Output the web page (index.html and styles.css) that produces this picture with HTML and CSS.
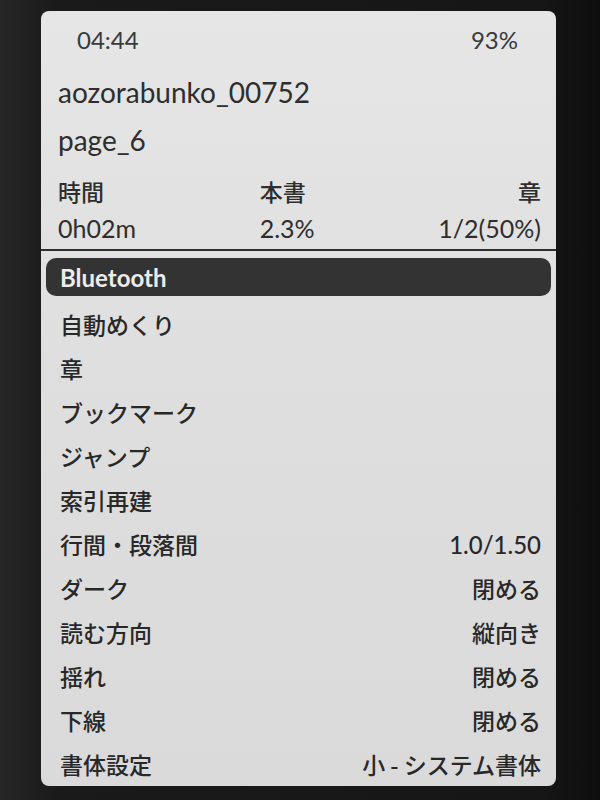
FILE: index.html
```html
<!DOCTYPE html>
<html lang="ja">
<head>
<meta charset="utf-8">
<link rel="stylesheet" href="styles.css">
</head>
<body>
<div class="screen">
  <header class="head">
    <div class="status">
      <span class="time">04:44</span>
      <span class="battery">93%</span>
    </div>
    <div class="title">aozorabunko_00752</div>
    <div class="title">page_6</div>
    <div class="stats">
      <div class="col">
        <div class="label">時間</div>
        <div class="value">0h02m</div>
      </div>
      <div class="col">
        <div class="label">本書</div>
        <div class="value">2.3%</div>
      </div>
      <div class="col right">
        <div class="label">章</div>
        <div class="value">1/2(50%)</div>
      </div>
    </div>
  </header>
  <div class="divider"></div>
  <ul class="menu">
    <li class="row active"><span class="lat">Bluetooth</span></li>
    <li class="row"><span>自動めくり</span></li>
    <li class="row"><span>章</span></li>
    <li class="row"><span>ブックマーク</span></li>
    <li class="row"><span>ジャンプ</span></li>
    <li class="row"><span>索引再建</span></li>
    <li class="row"><span>行間・段落間</span><span class="val lat">1.0/1.50</span></li>
    <li class="row"><span>ダーク</span><span class="val">閉める</span></li>
    <li class="row"><span>読む方向</span><span class="val">縦向き</span></li>
    <li class="row"><span>揺れ</span><span class="val">閉める</span></li>
    <li class="row"><span>下線</span><span class="val">閉める</span></li>
    <li class="row"><span>書体設定</span><span class="val">小 - システム書体</span></li>
  </ul>
</div>
</body>
</html>
```

FILE: styles.css
```css
html, body {
  margin: 0;
  padding: 0;
}
body {
  width: 600px;
  height: 800px;
  overflow: hidden;
  background: linear-gradient(90deg, #262626 0%, #1a1a1a 10%, #161616 90%, #0e0e0e 100%);
  font-family: "Lato", "Noto Sans CJK JP", sans-serif;
  color: #333;
}
.screen {
  margin: 11px 0 0 41px;
  width: 515px;
  height: 775px;
  border-radius: 8px;
  overflow: hidden;
  background: linear-gradient(180deg, #e6e6e6 0%, #dedede 50%, #dadada 100%);
  display: flex;
  flex-direction: column;
}
.head {
  padding: 15px 15px 0 17px;
}
.status {
  display: flex;
  justify-content: space-between;
  height: 28px;
  line-height: 28px;
  font-size: 24px;
  color: #3a3a3a;
  padding: 0 23px 0 19px;
}
.title {
  font-size: 28px;
  line-height: 48px;
  color: #2e2e2e;
}
.status + .title {
  margin-top: 14px;
}
.stats {
  display: flex;
  justify-content: space-between;
  margin-top: 12px;
  color: #2e2e2e;
}
.col.right {
  text-align: right;
}
.label {
  line-height: 30px;
  font-size: 23px;
  font-family: "Noto Sans CJK JP", sans-serif;
  font-weight: 500;
}
.value {
  line-height: 30px;
  font-size: 25px;
  margin-top: 7px;
}
.divider {
  height: 2px;
  background: #2e2e2e;
  margin-top: 6px;
}
.menu {
  list-style: none;
  margin: 0;
  padding: 7px 5px 0 5px;
}
.row {
  display: flex;
  justify-content: space-between;
  align-items: center;
  height: 44px;
  padding: 0 10px 0 14px;
  font-family: "Noto Sans CJK JP", sans-serif;
  font-size: 23px;
  font-weight: 500;
  color: #282828;
  box-sizing: border-box;
}
.lat {
  font-family: "Lato", "Noto Sans CJK JP", sans-serif;
  font-size: 24px;
}
.row.active {
  height: 38px;
  margin-bottom: 6px;
  background: #333;
  color: #ececec;
  border-radius: 10px;
}
.row.active .lat {
  font-weight: 700;
}
.val {
  text-align: right;
}
```
